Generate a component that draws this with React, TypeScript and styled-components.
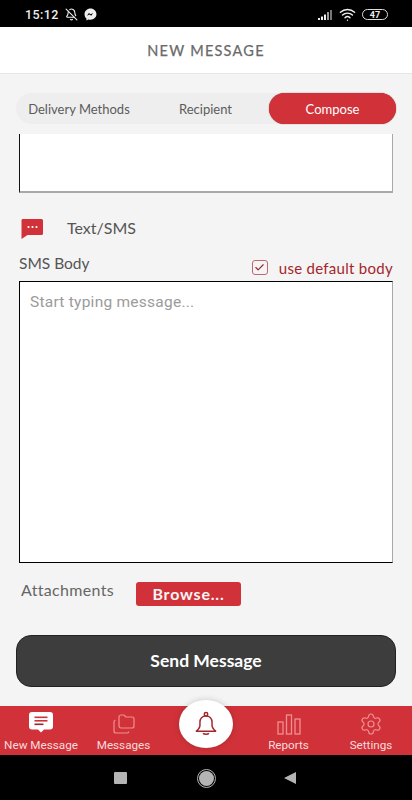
import styled, { createGlobalStyle } from "styled-components";
import { Check, Folders, Settings, Wifi, BellOff } from "lucide-react";

const GlobalStyle = createGlobalStyle`
  html, body {
    margin: 0;
    padding: 0;
    background: #f4f4f4;
  }
  * {
    box-sizing: border-box;
  }
`;

const RED = "#d13239";

const Shell = styled.div`
  position: relative;
  width: 412px;
  height: 800px;
  display: flex;
  flex-direction: column;
  overflow: hidden;
  background: #f4f4f4;
  font-family: Lato, "Liberation Sans", sans-serif;
`;

const StatusBar = styled.div`
  height: 27px;
  flex-shrink: 0;
  padding: 2px 24px 0 25px;
  display: flex;
  align-items: center;
  justify-content: space-between;
  background: #000;
  color: #eee;
`;
const StatusGroup = styled.div`
  display: flex;
  align-items: center;
  gap: ${(p: { $gap: number }) => p.$gap}px;
`;
const Clock = styled.span`
  font-family: Roboto, sans-serif;
  font-size: 12.5px;
  font-weight: 500;
  letter-spacing: 0.4px;
`;
const Battery = styled.span`
  width: 26px;
  height: 11px;
  margin-left: 2px;
  border: 1px solid #ddd;
  border-radius: 6px;
  display: flex;
  align-items: center;
  justify-content: center;
  font-family: Roboto, sans-serif;
  font-size: 9px;
  font-weight: 700;
  color: #eee;
`;

const Header = styled.header`
  height: 47px;
  flex-shrink: 0;
  display: flex;
  align-items: center;
  justify-content: center;
  background: #fff;
  border-bottom: 1px solid #e6e6e6;
  color: #6a6a6a;
  font-size: 14.5px;
  font-weight: 400;
  letter-spacing: 1.25px;
  -webkit-text-stroke: 0.25px #6a6a6a;
`;

const Content = styled.main`
  flex: 1;
  padding: 19px 16px 0;
  display: flex;
  flex-direction: column;
`;

const Tabs = styled.div`
  height: 31px;
  flex-shrink: 0;
  display: grid;
  grid-template-columns: 126px 127px 127px;
  border-radius: 16px;
  background: #eeeeee;
`;
const Tab = styled.div<{ $active?: boolean }>`
  display: flex;
  align-items: center;
  justify-content: center;
  border-radius: 16px;
  font-size: 13px;
  line-height: 28px;
  background: ${(p) => (p.$active ? RED : "transparent")};
  color: ${(p) => (p.$active ? "#fff" : "#5c5c5c")};
  box-shadow: ${(p) => (p.$active ? "0 0 1px #7a1c20" : "none")};
`;

const PreviousBody = styled.div`
  height: 59px;
  flex-shrink: 0;
  margin: 10px 3px 0;
  background: #fff;
  border-left: 1px solid #111;
  border-right: 1px solid #a8a8a8;
  border-bottom: 2px solid #a8a8a8;
`;

const Channel = styled.div`
  height: 24px;
  margin: 24px 0 0 5px;
  display: flex;
  align-items: center;
  gap: 23px;
  color: #555;
  font-size: 16px;
  line-height: 22px;
`;
const ChannelName = styled.span`
  margin-bottom: 2px;
`;

const BodyHead = styled.div`
  height: 26px;
  margin: 14px 3px 0;
  display: flex;
  justify-content: space-between;
`;
const BodyLabel = styled.span`
  font-size: 15.5px;
  line-height: 17px;
  color: #555;
`;
const DefaultToggle = styled.label`
  margin-top: 4px;
  display: flex;
  align-items: flex-start;
  gap: 11px;
  font-size: 15px;
  line-height: 18px;
  letter-spacing: 0.28px;
  color: #a4262c;
`;
const CheckBox = styled.span`
  width: 16px;
  height: 15px;
  margin-top: 1px;
  display: flex;
  align-items: center;
  justify-content: center;
  border: 1.5px solid #bd6a6e;
  border-radius: 3px;
  color: #8f2a2e;
`;

const BodyInput = styled.textarea`
  display: block;
  height: 282px;
  flex-shrink: 0;
  margin: 0 3px;
  padding: 11px 10px;
  resize: none;
  outline: none;
  background: #fff;
  border: 1.5px solid #000;
  border-right-color: #a8a8a8;
  border-radius: 0;
  font-family: Roboto, sans-serif;
  font-size: 15.5px;
  letter-spacing: 0.25px;
  &::placeholder {
    color: #9b9b9b;
    opacity: 1;
  }
`;

const AttachRow = styled.div`
  height: 24px;
  margin: 19px 0 0 5px;
  display: flex;
  align-items: flex-start;
  gap: 21px;
`;
const AttachLabel = styled.span`
  width: 94px;
  font-size: 16px;
  line-height: 15px;
  letter-spacing: 0.32px;
  white-space: nowrap;
  color: #666;
`;
const BrowseButton = styled.button`
  width: 105px;
  height: 24px;
  padding: 0 0 2px;
  border: none;
  border-radius: 3px;
  background: ${RED};
  color: #f6f6f6;
  font-family: inherit;
  font-size: 16px;
  font-weight: 700;
  letter-spacing: 0.8px;
`;

const SendButton = styled.button`
  height: 52px;
  flex-shrink: 0;
  margin-top: 29px;
  padding: 0 0 2px;
  border: 1px solid #222;
  border-radius: 15px;
  background: #3d3d3d;
  color: #fff;
  font-family: inherit;
  font-size: 17.5px;
  font-weight: 700;
`;

const NavBar = styled.nav`
  height: 49px;
  flex-shrink: 0;
  display: grid;
  grid-template-columns: 82px 83px 82px 83px 82px;
  background: ${RED};
`;
const NavItem = styled.div<{ $active?: boolean }>`
  padding-top: 6px;
  display: flex;
  flex-direction: column;
  align-items: center;
  gap: 2px;
  font-family: Roboto, sans-serif;
  font-size: 11.7px;
  line-height: 14px;
  white-space: nowrap;
  color: #f5dcdd;
  svg {
    display: block;
    height: 24px;
    color: ${(p) => (p.$active ? "#fff" : "#f08f92")};
  }
`;
const BellFab = styled.div`
  position: absolute;
  left: 179px;
  top: 700px;
  width: 54px;
  height: 48px;
  display: flex;
  align-items: center;
  justify-content: center;
  border-radius: 50%;
  background: #fff;
  box-shadow: 0 0 6px rgba(0, 0, 0, 0.18);
  color: #a4262c;
`;

const SystemBar = styled.div`
  height: 45px;
  flex-shrink: 0;
  display: flex;
  align-items: center;
  background: #000;
  padding: 1px 0 0 114px;
`;
const StopKey = styled.span`
  width: 13px;
  height: 12px;
  background: #b4b4b4;
  border-radius: 1px;
`;
const HomeKey = styled.span`
  width: 15px;
  height: 15px;
  margin: 0 0 0 72px;
  border-radius: 50%;
  background: #b4b4b4;
  outline: 1.5px solid #b4b4b4;
  outline-offset: 1.5px;
`;
const BackKey = styled.span`
  width: 0;
  height: 0;
  margin-left: 70px;
  border-top: 6.5px solid transparent;
  border-bottom: 6.5px solid transparent;
  border-right: 12px solid #b4b4b4;
`;

const MessengerIcon = () => (
  <svg width="13" height="13" viewBox="0 0 24 24">
    <path
      fill="#eee"
      d="M12 1C5.8 1 1 5.5 1 11.6c0 3.2 1.3 5.900 3.500 7.800V23l3.400-1.900c1.300.4 2.600.6 4.100.6 6.200 0 11-4.500 11-10.100S18.200 1 12 1z"
    />
    <path fill="#000" d="M5.500 14.500l3.500-5.400 3.300 2.500 4.500-2.500-3.500 5.400-3.300-2.500z" />
  </svg>
);

const SignalIcon = () => (
  <svg width="17" height="12" viewBox="0 0 17 12">
    <rect x="0" y="9" width="2" height="2" fill="#eee" />
    <rect x="3" y="7.500" width="2" height="3.500" fill="#eee" />
    <rect x="6" y="5.500" width="2" height="5.500" fill="#eee" />
    <rect x="9" y="3" width="2" height="8" fill="#999" />
    <rect x="12" y="1" width="2" height="10" fill="#777" />
  </svg>
);

const SmsIcon = () => (
  <svg width="23" height="20" viewBox="0 0 23 20">
    <path fill={RED} d="M1.500 0h19a1.500 1.500 0 0 1 1.500 1.500v13a1.500 1.500 0 0 1-1.500 1.500H6.500l-6 4V1.500A1.500 1.500 0 0 1 1.500 0z" />
    <circle cx="7.500" cy="8" r="1.100" fill="#fff" />
    <circle cx="11.500" cy="8" r="1.100" fill="#fff" />
    <circle cx="15.500" cy="8" r="1.100" fill="#fff" />
  </svg>
);

const NewMessageIcon = () => (
  <svg width="24" height="24" viewBox="0 0 24 24">
    <path
      fill="currentColor"
      d="M3 0h18a3 3 0 0 1 3 3v11.500a3 3 0 0 1-3 3h-6l-3 3-3-3H3a3 3 0 0 1-3-3V3a3 3 0 0 1 3-3z"
    />
    <rect x="5.500" y="4.500" width="13" height="1.600" fill={RED} />
    <rect x="5.500" y="8" width="13" height="1.600" fill={RED} />
    <rect x="5.500" y="11.500" width="9" height="1.600" fill="#8f2a2e" />
  </svg>
);

const ReportsIcon = () => (
  <svg width="24" height="24" viewBox="0 0 24 24" fill="none" stroke="currentColor" strokeWidth="1.300">
    <rect x="1" y="10" width="5" height="12" />
    <rect x="9.500" y="3" width="5" height="19" />
    <rect x="18" y="7" width="5" height="15" />
  </svg>
);

const AlertBell = () => (
  <svg width="22" height="26" viewBox="0 0 24 27" fill="none" stroke="currentColor" strokeWidth="1.600" strokeLinejoin="round">
    <circle cx="12" cy="2.800" r="1.900" />
    <path d="M12 4.700c-4.200 0-6.600 3-6.600 7v3.300c0 2.400-2 4.500-3.900 6.300h21c-1.900-1.800-3.900-3.900-3.900-6.300v-3.300c0-4-2.400-7-6.600-7z" />
    <path d="M8.800 23.600c.9 1.300 5.500 1.300 6.400 0" />
  </svg>
);

export default function App() {
  return (
    <Shell>
      <GlobalStyle />
      <StatusBar>
        <StatusGroup $gap={6}>
          <Clock>15:12</Clock>
          <BellOff size={13} strokeWidth={2} />
          <MessengerIcon />
        </StatusGroup>
        <StatusGroup $gap={4}>
          <SignalIcon />
          <Wifi size={17} strokeWidth={2} />
          <Battery>47</Battery>
        </StatusGroup>
      </StatusBar>
      <Header>NEW MESSAGE</Header>
      <Content>
        <Tabs>
          <Tab>Delivery Methods</Tab>
          <Tab>Recipient</Tab>
          <Tab $active>Compose</Tab>
        </Tabs>
        <PreviousBody />
        <Channel>
          <SmsIcon />
          <ChannelName>Text/SMS</ChannelName>
        </Channel>
        <BodyHead>
          <BodyLabel>SMS Body</BodyLabel>
          <DefaultToggle>
            <CheckBox>
              <Check size={11} strokeWidth={2.5} />
            </CheckBox>
            use default body
          </DefaultToggle>
        </BodyHead>
        <BodyInput placeholder="Start typing message..." />
        <AttachRow>
          <AttachLabel>Attachments</AttachLabel>
          <BrowseButton>Browse...</BrowseButton>
        </AttachRow>
        <SendButton>Send Message</SendButton>
      </Content>
      <NavBar>
        <NavItem $active>
          <NewMessageIcon />
          New Message
        </NavItem>
        <NavItem>
          <Folders size={26} strokeWidth={1.2} />
          Messages
        </NavItem>
        <div />
        <NavItem>
          <ReportsIcon />
          Reports
        </NavItem>
        <NavItem>
          <Settings size={24} strokeWidth={1.2} />
          Settings
        </NavItem>
      </NavBar>
      <BellFab>
        <AlertBell />
      </BellFab>
      <SystemBar>
        <StopKey />
        <HomeKey />
        <BackKey />
      </SystemBar>
    </Shell>
  );
}
